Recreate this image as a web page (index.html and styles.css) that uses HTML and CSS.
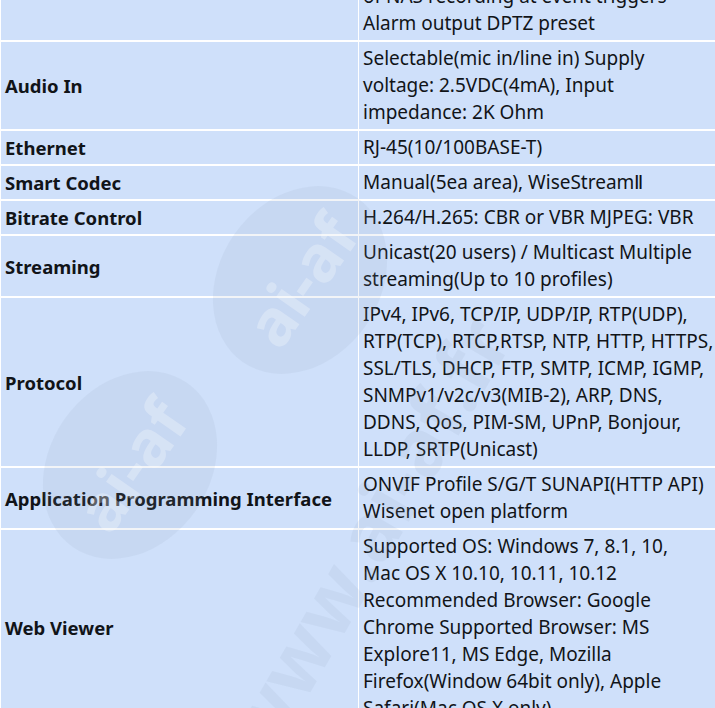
FILE: index.html
```html
<!DOCTYPE html>
<html>
<head>
<meta charset="utf-8">
<link rel="stylesheet" href="styles.css">
</head>
<body>
<div class="page">
<table class="spec">
<tr>
  <th>Alarm Events</th>
  <td>File upload via FTP and e-mail<br>Notification via e-mail<br>of NAS recording at event triggers<br>Alarm output DPTZ preset</td>
</tr>
<tr>
  <th>Audio In</th>
  <td>Selectable(mic in/line in) Supply<br>voltage: 2.5VDC(4mA), Input<br>impedance: 2K Ohm</td>
</tr>
<tr>
  <th>Ethernet</th>
  <td>RJ-45(10/100BASE-T)</td>
</tr>
<tr>
  <th>Smart Codec</th>
  <td>Manual(5ea area), WiseStream&#8545;</td>
</tr>
<tr>
  <th>Bitrate Control</th>
  <td>H.264/H.265: CBR or VBR MJPEG: VBR</td>
</tr>
<tr>
  <th>Streaming</th>
  <td>Unicast(20 users) / Multicast Multiple<br>streaming(Up to 10 profiles)</td>
</tr>
<tr>
  <th>Protocol</th>
  <td>IPv4, IPv6, TCP/IP, UDP/IP, RTP(UDP),<br>RTP(TCP), RTCP,RTSP, NTP, HTTP, HTTPS,<br>SSL/TLS, DHCP, FTP, SMTP, ICMP, IGMP,<br>SNMPv1/v2c/v3(MIB-2), ARP, DNS,<br>DDNS, QoS, PIM-SM, UPnP, Bonjour,<br>LLDP, SRTP(Unicast)</td>
</tr>
<tr>
  <th>Application Programming Interface</th>
  <td>ONVIF Profile S/G/T SUNAPI(HTTP API)<br>Wisenet open platform</td>
</tr>
<tr>
  <th>Web Viewer</th>
  <td>Supported OS: Windows 7, 8.1, 10,<br>Mac OS X 10.10, 10.11, 10.12<br>Recommended Browser: Google<br>Chrome Supported Browser: MS<br>Explore11, MS Edge, Mozilla<br>Firefox(Window 64bit only), Apple<br>Safari(Mac OS X only)</td>
</tr>
</table>
<div class="wm wm-logo"><span>ai-af</span></div>
<div class="wm wm-logo wm-logo2"><span>ai-af</span></div>
<div class="wm wm-url">www.ai-af.fr</div>
</div>
</body>
</html>
```

FILE: styles.css
```css
html, body {
  margin: 0;
  padding: 0;
  overflow: hidden;
  background: #ffffff;
}
.page {
  position: relative;
  width: 715px;
  height: 708px;
  overflow: hidden;
}
.spec {
  border-collapse: separate;
  border-spacing: 1px 2px;
  background: #ffffff;
  margin: -76px 0 0 0;
  width: 740px;
  font-family: "Noto Sans", "Open Sans", sans-serif;
  font-size: 19px;
  line-height: 27px;
  color: #111418;
}
.spec th,
.spec td {
  background: #cfe0fa;
  padding: 3px 4px 3px 4px;
  vertical-align: middle;
  text-align: left;
  white-space: nowrap;
}
.spec th {
  width: 349px;
  font-size: 18.5px;
  font-weight: 700;
}
.spec td {
  font-weight: 400;
}
.wm {
  position: absolute;
  pointer-events: none;
  font-family: "Noto Sans", sans-serif;
  font-weight: 700;
}
.wm-logo {
  left: 200px;
  top: 200px;
  width: 200px;
  height: 160px;
  border-radius: 50%;
  background: rgba(150, 165, 190, 0.12);
  transform: rotate(-55deg);
  display: flex;
  align-items: center;
  justify-content: center;
}
.wm-logo span {
  color: rgba(255, 255, 255, 0.28);
  font-size: 64px;
}
.wm-logo2 {
  left: 30px;
  top: 385px;
}
.wm-url {
  left: 195px;
  top: 720px;
  font-size: 80px;
  color: rgba(150, 165, 190, 0.12);
  transform: rotate(-60deg);
  transform-origin: left top;
  white-space: nowrap;
}
```
